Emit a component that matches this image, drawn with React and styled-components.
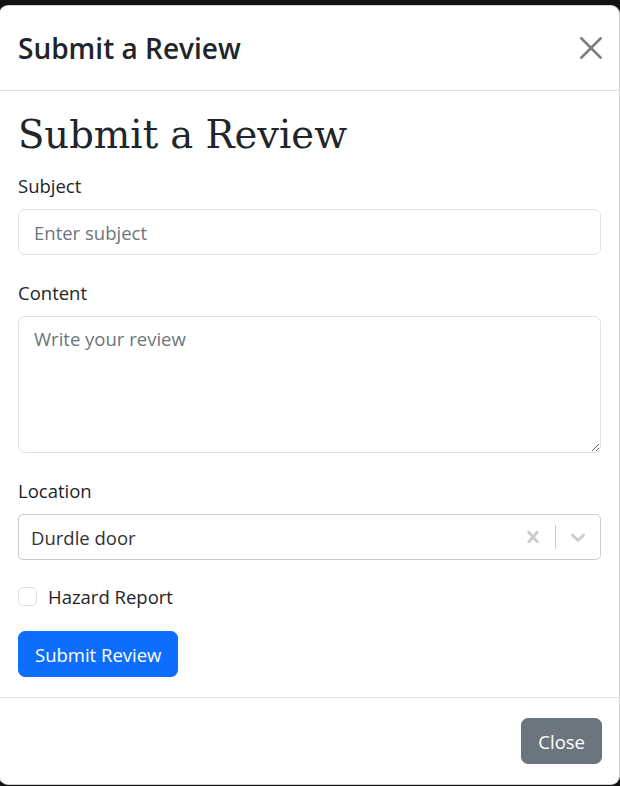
import React from "react";
import styled, { createGlobalStyle } from "styled-components";

const Global = createGlobalStyle`
  html, body { margin: 0; padding: 0; }
  body {
    background: #111214;
    font-family: "Open Sans", "Noto Sans", sans-serif;
    color: #212529;
    overflow: hidden;
  }
  * { box-sizing: border-box; }
`;

const Page = styled.div`
  width: 620px;
  height: 786px;
  padding-top: 5px;
  background: #111214;
`;

const Modal = styled.div`
  width: 621px;
  margin-left: -1px;
  background: #fff;
  border: 1px solid rgba(0, 0, 0, 0.175);
  border-radius: 9px;
  display: flex;
  flex-direction: column;
`;

const Header = styled.div`
  display: flex;
  align-items: center;
  justify-content: space-between;
  height: 85px;
  padding: 0 16px 0 18px;
  border-bottom: 1px solid #dee2e6;
`;

const Title = styled.h5`
  margin: 0;
  font-size: 28px;
  font-weight: 600;
  line-height: 1.5;
  color: #212529;
`;

const CloseX = styled.button`
  width: 24px;
  height: 24px;
  padding: 0;
  border: 0;
  background: transparent;
  opacity: 0.5;
  display: flex;
  align-items: center;
  justify-content: center;
  cursor: pointer;
`;

const Body = styled.div`
  padding: 18px 18px 20px;
`;

const Heading = styled.h1`
  margin: 0 0 10px;
  font-family: "DejaVu Serif", "Liberation Serif", serif;
  font-weight: 400;
  font-size: 38.5px;
  line-height: 52px;
  color: #212529;
`;

const Group = styled.div`
  margin-bottom: ${(p) => p.$mb ?? 23}px;
`;

const Label = styled.label`
  display: block;
  font-size: 18.5px;
  line-height: 29px;
  margin-bottom: 9px;
  color: #212529;
`;

const Input = styled.input`
  display: block;
  width: 100%;
  height: 46px;
  padding: 0 15px;
  font-family: inherit;
  font-size: 18.5px;
  color: #212529;
  border: 1px solid #dee2e6;
  border-radius: 7px;
  background: #fff;
  outline: none;
  &::placeholder { color: #6c757d; }
`;

const TextArea = styled.textarea`
  display: block;
  width: 100%;
  height: 137px;
  padding: 8px 15px;
  font-family: inherit;
  font-size: 18.5px;
  line-height: 28px;
  color: #212529;
  border: 1px solid #dee2e6;
  border-radius: 7px;
  background: #fff;
  outline: none;
  resize: vertical;
  &::placeholder { color: #6c757d; }
`;

const SelectControl = styled.div`
  display: flex;
  align-items: center;
  height: 46px;
  border: 1px solid #cccccc;
  border-radius: 5px;
  background: #fff;
`;

const SelectValue = styled.div`
  flex: 1;
  padding: 0 12px;
  font-size: 18.5px;
  color: #333333;
`;

const Indicator = styled.div`
  display: flex;
  align-items: center;
  justify-content: center;
  padding: 0 10px;
  color: #cccccc;
`;

const Separator = styled.span`
  width: 1px;
  align-self: stretch;
  margin: 10px 0;
  background: #cccccc;
`;

const CheckRow = styled.label`
  display: flex;
  align-items: center;
  gap: 11px;
  height: 29px;
  margin-bottom: 20px;
  font-size: 18.5px;
  color: #212529;
`;

const CheckBox = styled.span`
  width: 19px;
  height: 19px;
  border: 1px solid #dee2e6;
  border-radius: 5px;
  background: #fff;
  flex-shrink: 0;
`;

const Button = styled.button`
  height: 46px;
  padding: 0 16px;
  font-family: inherit;
  font-size: 18.5px;
  border: 1px solid ${(p) => p.$bg};
  border-radius: 7px;
  background: ${(p) => p.$bg};
  color: #fff;
  cursor: pointer;
`;

const Footer = styled.div`
  display: flex;
  justify-content: flex-end;
  padding: 20px 17px 20px;
  border-top: 1px solid #dee2e6;
`;

const Chevron = () => (
  <svg width="24" height="24" viewBox="0 0 20 20" fill="currentColor">
    <path d="M4.516 7.548c0.436-0.446 1.043-0.481 1.576 0l3.908 3.747 3.908-3.747c0.533-0.481 1.141-0.446 1.574 0 0.436 0.445 0.408 1.197 0 1.615-0.406 0.418-4.695 4.502-4.695 4.502-0.217 0.223-0.502 0.335-0.787 0.335s-0.57-0.112-0.789-0.335c0 0-4.287-4.084-4.695-4.502s-0.436-1.17 0-1.615z" />
  </svg>
);

const Cross = () => (
  <svg width="24" height="24" viewBox="0 0 20 20" fill="currentColor">
    <path d="M14.348 14.849c-0.469 0.469-1.229 0.469-1.697 0l-2.651-3.030-2.651 3.029c-0.469 0.469-1.229 0.469-1.697 0-0.469-0.469-0.469-1.229 0-1.697l2.758-3.15-2.759-3.152c-0.469-0.469-0.469-1.228 0-1.697s1.228-0.469 1.697 0l2.652 3.031 2.651-3.031c0.469-0.469 1.228-0.469 1.697 0s0.469 1.229 0 1.697l-2.758 3.152 2.758 3.15c0.469 0.469 0.469 1.229 0 1.698z" />
  </svg>
);

export default function App() {
  return (
    <>
      <Global />
      <Page>
        <Modal>
          <Header>
            <Title>Submit a Review</Title>
            <CloseX aria-label="Close">
              <svg width="22" height="22" viewBox="0 0 16 16" fill="#000">
                <path d="M.293.293a1 1 0 0 1 1.414 0L8 6.586 14.293.293a1 1 0 1 1 1.414 1.414L9.414 8l6.293 6.293a1 1 0 0 1-1.414 1.414L8 9.414l-6.293 6.293a1 1 0 0 1-1.414-1.414L6.586 8 .293 1.707a1 1 0 0 1 0-1.414z" />
              </svg>
            </CloseX>
          </Header>
          <Body>
            <Heading>Submit a Review</Heading>
            <Group>
              <Label>Subject</Label>
              <Input placeholder="Enter subject" />
            </Group>
            <Group>
              <Label>Content</Label>
              <TextArea placeholder="Write your review" />
            </Group>
            <Group $mb={22}>
              <Label>Location</Label>
              <SelectControl>
                <SelectValue>Durdle door</SelectValue>
                <Indicator>
                  <Cross />
                </Indicator>
                <Separator />
                <Indicator>
                  <Chevron />
                </Indicator>
              </SelectControl>
            </Group>
            <CheckRow>
              <CheckBox />
              Hazard Report
            </CheckRow>
            <Button $bg="#0d6efd">Submit Review</Button>
          </Body>
          <Footer>
            <Button $bg="#6c757d">Close</Button>
          </Footer>
        </Modal>
      </Page>
    </>
  );
}
